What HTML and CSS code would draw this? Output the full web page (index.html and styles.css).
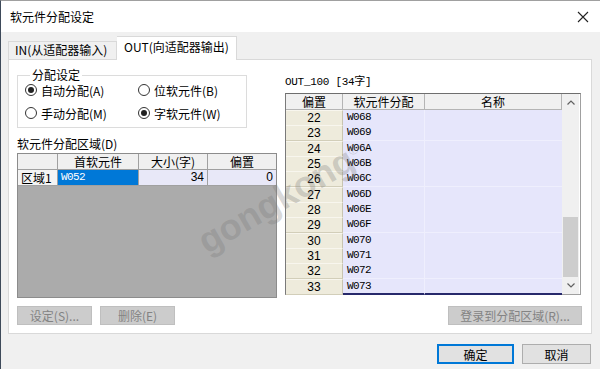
FILE: index.html
```html
<!DOCTYPE html>
<html lang="zh-CN">
<head>
    <meta charset="UTF-8">
    <title>软元件分配设定</title>
    <link rel="stylesheet" href="styles.css">
</head>
<body>
    <div class="window">
        <div class="titlebar">
            <span class="title">软元件分配设定</span>
            <svg class="close" width="12" height="12" viewBox="0 0 12 12">
                <path d="M1 1 L11 11 M11 1 L1 11" stroke="#222" stroke-width="1.1" fill="none"/>
            </svg>
        </div>

        <div class="client">
            <div class="tabs">
                <div class="tab">IN(从适配器输入)</div>
                <div class="tab active">OUT(向适配器输出)</div>
            </div>

            <div class="panel">
                <div class="panel-main">
                    <div class="col-left">
                        <fieldset class="group">
                            <legend>分配设定</legend>
                            <div class="radios">
                                <div class="radio checked"><span class="circle"></span>自动分配(A)</div>
                                <div class="radio"><span class="circle"></span>位软元件(B)</div>
                                <div class="radio"><span class="circle"></span>手动分配(M)</div>
                                <div class="radio checked"><span class="circle"></span>字软元件(W)</div>
                            </div>
                        </fieldset>

                        <div class="caption">软元件分配区域(D)</div>
                        <div class="area-grid">
                            <div class="area-row area-head">
                                <div class="cell"></div>
                                <div class="cell">首软元件</div>
                                <div class="cell">大小(字)</div>
                                <div class="cell">偏置</div>
                            </div>
                            <div class="area-row">
                                <div class="cell rowhead">区域1</div>
                                <div class="cell selected">W052</div>
                                <div class="cell num">34</div>
                                <div class="cell num">0</div>
                            </div>
                            <div class="area-empty"></div>
                        </div>
                    </div>

                    <div class="col-right">
                        <div class="caption mono-cap">OUT_100 [34字]</div>
                        <div class="out-grid">
                            <div class="out-table">
                                <div class="out-row out-head">
                                    <div class="cell">偏置</div>
                                    <div class="cell">软元件分配</div>
                                    <div class="cell">名称</div>
                                </div>
                                <div class="out-row"><div class="cell off">22</div><div class="cell dev">W068</div><div class="cell name"></div></div>
                                <div class="out-row"><div class="cell off">23</div><div class="cell dev">W069</div><div class="cell name"></div></div>
                                <div class="out-row"><div class="cell off">24</div><div class="cell dev">W06A</div><div class="cell name"></div></div>
                                <div class="out-row"><div class="cell off">25</div><div class="cell dev">W06B</div><div class="cell name"></div></div>
                                <div class="out-row"><div class="cell off">26</div><div class="cell dev">W06C</div><div class="cell name"></div></div>
                                <div class="out-row"><div class="cell off">27</div><div class="cell dev">W06D</div><div class="cell name"></div></div>
                                <div class="out-row"><div class="cell off">28</div><div class="cell dev">W06E</div><div class="cell name"></div></div>
                                <div class="out-row"><div class="cell off">29</div><div class="cell dev">W06F</div><div class="cell name"></div></div>
                                <div class="out-row"><div class="cell off">30</div><div class="cell dev">W070</div><div class="cell name"></div></div>
                                <div class="out-row"><div class="cell off">31</div><div class="cell dev">W071</div><div class="cell name"></div></div>
                                <div class="out-row"><div class="cell off">32</div><div class="cell dev">W072</div><div class="cell name"></div></div>
                                <div class="out-row last"><div class="cell off">33</div><div class="cell dev">W073</div><div class="cell name"></div></div>
                            </div>
                            <div class="scrollbar">
                                <div class="sb-btn">
                                    <svg width="8" height="5" viewBox="0 0 8 5"><path d="M0.5 4.5 L4 1 L7.5 4.5" stroke="#606060" stroke-width="1.2" fill="none"/></svg>
                                </div>
                                <div class="sb-track"><div class="sb-thumb"></div></div>
                                <div class="sb-btn">
                                    <svg width="8" height="5" viewBox="0 0 8 5"><path d="M0.5 0.5 L4 4 L7.5 0.5" stroke="#606060" stroke-width="1.2" fill="none"/></svg>
                                </div>
                            </div>
                        </div>
                    </div>
                </div>

                <div class="panel-buttons">
                    <div class="btn-group">
                        <button class="btn disabled">设定(S)...</button>
                        <button class="btn disabled">删除(E)</button>
                    </div>
                    <button class="btn disabled wide">登录到分配区域(R)...</button>
                </div>
            </div>

            <div class="dialog-buttons">
                <button class="btn default">确定</button>
                <button class="btn cancel">取消</button>
            </div>
        </div>

        <div class="watermark">gongkong<sup>®</sup></div>
    </div>
</body>
</html>
```

FILE: styles.css
```css
/* Диалог в стиле Windows */
* {
    margin: 0;
    padding: 0;
    box-sizing: border-box;
}

body {
    font-family: "Noto Sans CJK SC", "Noto Sans", sans-serif;
    font-size: 12px;
    color: #000;
    background: #fff;
}

.window {
    position: relative;
    width: 600px;
    height: 369px;
    border-left: 1px solid #3e4a5a;
    border-top: 1px solid #a0a0a0;
    overflow: hidden;
    display: flex;
    flex-direction: column;
}

.titlebar {
    height: 31px;
    background: #fff;
    display: flex;
    align-items: center;
    justify-content: space-between;
    padding: 0 11px 0 9px;
}

.title {
    font-size: 12px;
}

.client {
    flex: 1;
    background: #f0f0f0;
    padding: 4px 8px 0 7px;
}

/* Вкладки */
.tabs {
    display: flex;
    align-items: flex-end;
    height: 23px;
}

.tab {
    height: 18px;
    line-height: 16px;
    padding: 0 6px;
    border: 1px solid #d9d9d9;
    border-bottom: none;
    background: #f0f0f0;
    width: 109px;
    white-space: nowrap;
}

.tab.active {
    height: 24px;
    line-height: 20px;
    width: 120px;
    background: #fff;
    padding: 0 7px;
    margin-bottom: -1px;
    position: relative;
    z-index: 1;
    border-left: none;
}

.panel {
    background: #fff;
    border: 1px solid #d9d9d9;
    padding: 8px 9px 8px 8px;
}

.panel-main {
    display: flex;
    gap: 8px;
}

.col-left {
    width: 260px;
    display: flex;
    flex-direction: column;
}

.col-right {
    width: 296px;
    padding-top: 7px;
}

/* Группа переключателей */
.group {
    width: 230px;
    height: 60px;
    border: 1px solid #dcdcdc;
    padding: 1px 6px 0 7px;
}

.group legend {
    margin-left: 5px;
    padding: 0 2px;
    line-height: 14px;
}

.radios {
    display: grid;
    grid-template-columns: 113px 1fr;
    row-gap: 9px;
}

.radio {
    display: flex;
    align-items: center;
    height: 14px;
    gap: 4px;
    white-space: nowrap;
}

.circle {
    width: 12px;
    height: 12px;
    border: 1px solid #333;
    border-radius: 50%;
    background: #fff;
    display: flex;
    align-items: center;
    justify-content: center;
}

.radio.checked .circle::after {
    content: '';
    width: 6px;
    height: 6px;
    border-radius: 50%;
    background: #222;
}

.caption {
    line-height: 14px;
    margin: 9px 0 2px;
}

.mono-cap {
    margin: 0 0 4px;
    font-family: "Liberation Mono", "Noto Sans CJK SC", monospace;
    font-size: 11px;
    letter-spacing: -0.3px;
}

/* Таблица областей */
.area-grid {
    height: 145px;
    border: 1px solid #8c8c8c;
    display: flex;
    flex-direction: column;
    background: #ababab;
}

.area-row {
    display: grid;
    grid-template-columns: 40px 81px 69px 1fr;
    height: 16px;
    background: #fff;
}

.area-head .cell {
    background: #f0f0f0;
    text-align: center;
    border-right: 1px solid #a0a0a0;
    border-bottom: 1px solid #a0a0a0;
    line-height: 15px;
}

.area-row .cell {
    line-height: 15px;
    border-right: 1px solid #a0a0a0;
    border-bottom: 1px solid #a0a0a0;
    white-space: nowrap;
    overflow: hidden;
}

.area-row .cell:last-child {
    border-right: none;
}

.cell.rowhead {
    background: #f4f4f4;
    padding-left: 3px;
}

.cell.selected {
    background: #0078d7;
    color: #fff;
    padding-left: 3px;
    font-family: "Liberation Mono", monospace;
    font-size: 11px;
    letter-spacing: -0.6px;
}

.cell.num {
    background: #e8e8f8;
    text-align: right;
    padding-right: 3px;
    font-family: "Liberation Sans", sans-serif;
}

.area-empty {
    flex: 1;
    background: #ababab;
}

/* Таблица OUT */
.out-grid {
    display: flex;
    height: 202px;
    border: 1px solid #a0a0a0;
    border-top-color: #6e6e6e;
    border-left-color: #7a7a7a;
}

.out-table {
    width: 276px;
    display: flex;
    flex-direction: column;
    background: #fff;
}

.out-row {
    display: grid;
    grid-template-columns: 57px 82px 137px;
    height: 15.33px;
}

.out-row.out-head {
    height: 16px;
}

.out-head .cell {
    background: #f0f0f0;
    text-align: center;
    line-height: 15px;
    border-right: 1px solid #b4b4b4;
    border-bottom: 1px solid #b4b4b4;
}

.out-row .cell.off {
    background: #eeebdc;
    text-align: center;
    font-family: "Liberation Sans", sans-serif;
    line-height: 14px;
    border-right: 1px solid #c8c4b0;
    border-bottom: 1px solid #d2ceb9;
    border-top: 1px solid #f8f6ee;
}

.out-row .cell.dev {
    background: #e6e6fb;
    padding-left: 4px;
    font-family: "Liberation Mono", monospace;
    font-size: 11px;
    letter-spacing: -0.6px;
    line-height: 14px;
    border-right: 1px solid #efeffd;
    border-bottom: 1px solid #efeffd;
}

.out-row .cell.name {
    background: #e6e6fb;
    border-bottom: 1px solid #efeffd;
}

.out-row.last .cell.dev,
.out-row.last .cell.name {
    border-bottom: 2px solid #27296b;
}

.scrollbar {
    width: 17px;
    background: #f0f0f0;
    display: flex;
    flex-direction: column;
}

.sb-btn {
    height: 17px;
    display: flex;
    align-items: center;
    justify-content: center;
}

.sb-track {
    flex: 1;
    display: flex;
    flex-direction: column;
    justify-content: flex-end;
    padding: 0 1px;
}

.sb-thumb {
    height: 60px;
    background: #cdcdcd;
}

/* Кнопки */
.panel-buttons {
    display: flex;
    justify-content: space-between;
    margin-top: 8px;
}

.btn-group {
    display: flex;
    gap: 8px;
}

.btn {
    font-family: "Noto Sans CJK SC", sans-serif;
    font-size: 12px;
    height: 19px;
    width: 75px;
    background: #e1e1e1;
    border: 1px solid #adadad;
    color: #000;
    line-height: 15px;
}

.btn.disabled {
    background: #cccccc;
    border-color: #bfbfbf;
    color: #838383;
}

.btn.wide {
    width: 134px;
}

.dialog-buttons {
    display: flex;
    justify-content: flex-end;
    gap: 8px;
    margin-top: 10px;
    padding-right: 1px;
}

.dialog-buttons .btn {
    height: 20px;
}

.btn.default {
    border: 2px solid #0078d7;
    width: 77px;
}

.btn.cancel {
    width: 69px;
}

/* Водяной знак поверх содержимого */
.watermark {
    position: absolute;
    left: 200px;
    top: 222px;
    font-family: "Liberation Sans", sans-serif;
    font-weight: bold;
    font-size: 36px;
    color: rgba(120, 120, 120, 0.3);
    transform: rotate(-30deg);
    transform-origin: left center;
    pointer-events: none;
    white-space: nowrap;
}

.watermark sup {
    font-size: 14px;
    font-weight: normal;
}
```
